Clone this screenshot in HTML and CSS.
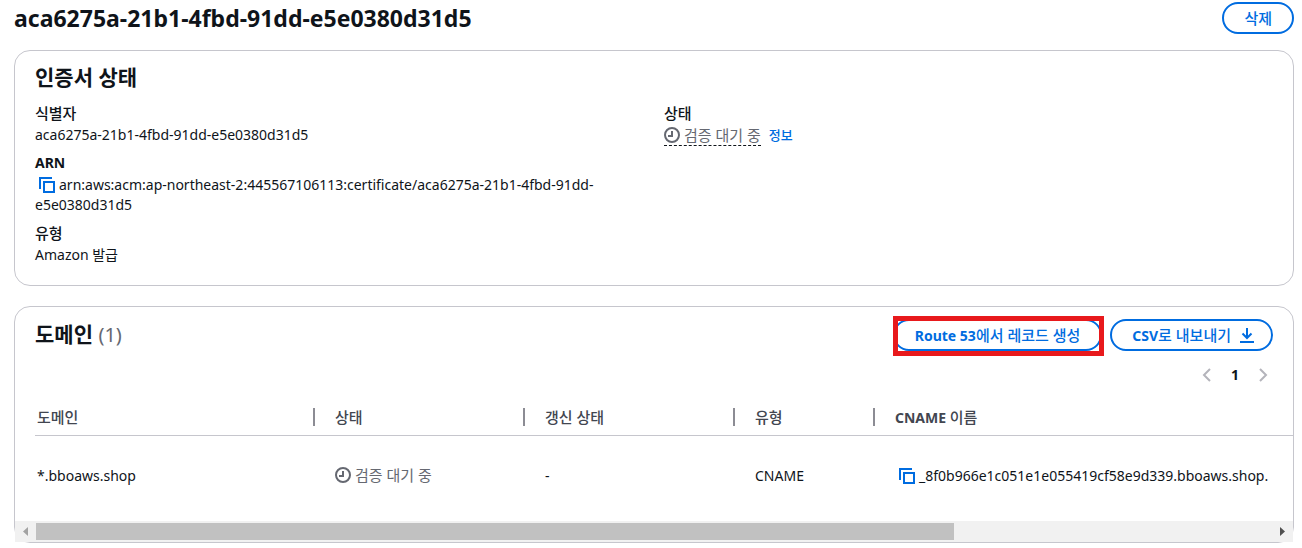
FILE: index.html
```html
<!DOCTYPE html>
<html lang="ko">
<head>
    <meta charset="UTF-8">
    <meta name="viewport" content="width=device-width, initial-scale=1.0">
    <title>aca6275a-21b1-4fbd-91dd-e5e0380d31d5</title>
    <link rel="stylesheet" href="styles.css">
</head>
<body>
    <header class="page-header">
        <h1>aca6275a-21b1-4fbd-91dd-e5e0380d31d5</h1>
        <button type="button" class="btn"><span class="ko">삭제</span></button>
    </header>

    <section class="card status-card">
        <h2>인증서 상태</h2>
        <div class="columns">
            <dl class="details">
                <div>
                    <dt class="ko">식별자</dt>
                    <dd>aca6275a-21b1-4fbd-91dd-e5e0380d31d5</dd>
                </div>
                <div>
                    <dt>ARN</dt>
                    <dd><button type="button" class="copy" aria-label="복사"><svg viewBox="0 0 16 16"><path d="M1 12V1h12M5 5h10v10H5z"/></svg></button>arn:aws:acm:ap-northeast-2:445567106113:certificate/aca6275a-21b1-4fbd-91dd-e5e0380d31d5</dd>
                </div>
                <div>
                    <dt class="ko">유형</dt>
                    <dd>Amazon 발급</dd>
                </div>
            </dl>
            <dl class="details">
                <div>
                    <dt class="ko">상태</dt>
                    <dd class="status-line">
                        <span class="status dashed"><svg viewBox="0 0 16 16"><circle cx="8" cy="8" r="7"/><path d="M8 4v5H4"/></svg>검증 대기 중</span>
                        <a href="#" class="info">정보</a>
                    </dd>
                </div>
            </dl>
        </div>
    </section>

    <section class="card">
        <div class="table-header">
            <h2>도메인 <span class="count">(1)</span></h2>
            <div class="actions">
                <div class="highlight">
                    <button type="button" class="btn"><span>Route 53<span class="ko">에서 레코드 생성</span></span></button>
                </div>
                <button type="button" class="btn btn-icon"><span>CSV<span class="ko">로 내보내기</span></span>
                    <svg viewBox="0 0 16 16"><path d="M8 1v10M3.500 6.500L8 11l4.500-4.500M1 15h14"/></svg>
                </button>
            </div>
        </div>
        <nav class="pagination">
            <button type="button" class="page" aria-label="이전"><svg viewBox="0 0 16 16"><path d="M11 2L5 8l6 6"/></svg></button>
            <button type="button" class="page">1</button>
            <button type="button" class="page" aria-label="다음"><svg viewBox="0 0 16 16"><path d="M5 2l6 6-6 6"/></svg></button>
        </nav>
        <div class="table-wrap">
            <table>
                <colgroup>
                    <col class="col-domain">
                    <col class="col-status">
                    <col class="col-status">
                    <col class="col-type">
                    <col class="col-name">
                </colgroup>
                <thead>
                    <tr>
                        <th><span class="ko">도메인</span></th>
                        <th><span class="ko">상태</span></th>
                        <th><span class="ko">갱신 상태</span></th>
                        <th><span class="ko">유형</span></th>
                        <th>CNAME <span class="ko">이름</span></th>
                    </tr>
                </thead>
                <tbody>
                    <tr>
                        <td>*.bboaws.shop</td>
                        <td><span class="status"><svg viewBox="0 0 16 16"><circle cx="8" cy="8" r="7"/><path d="M8 4v5H4"/></svg>검증 대기 중</span></td>
                        <td>-</td>
                        <td>CNAME</td>
                        <td><button type="button" class="copy" aria-label="복사"><svg viewBox="0 0 16 16"><path d="M1 12V1h12M5 5h10v10H5z"/></svg></button>_8f0b966e1c051e1e055419cf58e9d339.bboaws.shop.</td>
                    </tr>
                </tbody>
            </table>
        </div>
        <div class="scrollbar">
            <svg class="scroll-arrow" viewBox="0 0 21 21"><path d="M13 6v9l-5-4.500z"/></svg>
            <div class="track"><div class="thumb"></div></div>
            <svg class="scroll-arrow next" viewBox="0 0 21 21"><path d="M8 6v9l5-4.500z"/></svg>
        </div>
    </section>
</body>
</html>
```
FILE: styles.css
```css
* {
    box-sizing: border-box;
}
body {
    margin: 0;
    padding: 2px 8px 4px 14px;
    background-color: #fff;
    color: #0f141a;
    font-family: "Noto Sans", "Noto Sans CJK KR", sans-serif;
    font-size: 14px;
    line-height: 20px;
    overflow: hidden;
}
h1, h2, dl, dd {
    margin: 0;
}
h1 {
    font-size: 23px;
    line-height: 32px;
}
h2 {
    font-size: 21px;
    line-height: 26px;
}
button {
    font: inherit;
    cursor: pointer;
}
svg {
    width: 16px;
    height: 16px;
    fill: none;
    stroke: currentColor;
    stroke-width: 2;
}
.ko {
    font-size: 15px;
    font-weight: 500;
}
.page-header {
    display: flex;
    justify-content: space-between;
    margin-bottom: 16px;
}
.btn {
    display: flex;
    align-items: center;
    gap: 8px;
    height: 32px;
    padding: 0 20px;
    border: 2px solid #006ce0;
    border-radius: 16px;
    background-color: #fff;
    color: #006ce0;
    font-weight: bold;
    white-space: nowrap;
}
.btn-icon {
    padding-right: 16px;
}
.card {
    border: 1px solid #c6c6cd;
    border-radius: 16px;
    margin-bottom: 20px;
}
.status-card {
    padding: 13px 20px 20px;
}
.columns {
    display: grid;
    grid-template-columns: 1fr 1fr;
    gap: 20px;
    margin-top: 13px;
}
.details {
    display: flex;
    flex-direction: column;
    gap: 8px;
}
dt {
    margin-bottom: 2px;
    font-weight: bold;
}
.copy {
    width: 24px;
    height: 20px;
    padding: 2px 4px;
    border: 0;
    background: none;
    color: #006ce0;
    vertical-align: top;
}
.copy svg {
    display: block;
}
.status-line {
    display: flex;
    gap: 8px;
}
.status {
    display: inline-flex;
    align-items: center;
    gap: 4px;
    color: #656871;
    font-size: 15px;
}
.dashed {
    border-bottom: 1px dashed #0f141a;
}
.info {
    color: #006ce0;
    font-size: 13px;
    font-weight: 500;
    text-decoration: none;
}
.table-header {
    display: flex;
    justify-content: space-between;
    padding: 12px 20px 0;
}
.table-header h2 {
    margin-top: 2px;
}
.count {
    color: #656871;
    font-size: 20px;
    font-weight: normal;
}
.actions {
    display: flex;
    gap: 8px;
}
.highlight {
    position: relative;
}
.highlight::after {
    content: "";
    position: absolute;
    inset: -3px -2px -5px 0;
    border: 5px solid #e8191c;
    pointer-events: none;
}
.pagination {
    display: flex;
    justify-content: flex-end;
    gap: 4px;
    padding: 12px 18px 12px 0;
}
.page {
    display: flex;
    align-items: center;
    justify-content: center;
    width: 24px;
    height: 24px;
    padding: 0;
    border: 0;
    background: none;
    color: #0f141a;
    font-weight: bold;
}
.page svg {
    color: #b4b4bb;
}
.table-wrap {
    padding-left: 20px;
    overflow: hidden;
}
table {
    width: 2000px;
    table-layout: fixed;
    border-collapse: separate;
    border-spacing: 0;
}
.col-domain {
    width: 280px;
}
.col-status {
    width: 210px;
}
.col-type {
    width: 140px;
}
th {
    height: 37px;
    padding: 0 0 0 20px;
    border-bottom: 1px solid #c6c6cd;
    background: linear-gradient(#8c8c94, #8c8c94) right 9px / 2px 18px no-repeat;
    color: #424650;
    text-align: left;
}
td {
    height: 80px;
    padding: 0 0 0 20px;
}
th:first-child, td:first-child {
    padding-left: 2px;
}
.scrollbar {
    display: flex;
    height: 21px;
    margin-top: 5px;
    background-color: #f1f1f1;
}
.scroll-arrow {
    width: 21px;
    height: 21px;
    fill: #a3a3a3;
    stroke: none;
}
.scroll-arrow.next {
    fill: #505050;
}
.track {
    flex: 1;
    padding: 2px 0;
}
.thumb {
    width: 74.3%;
    height: 17px;
    background-color: #c1c1c1;
}
```
